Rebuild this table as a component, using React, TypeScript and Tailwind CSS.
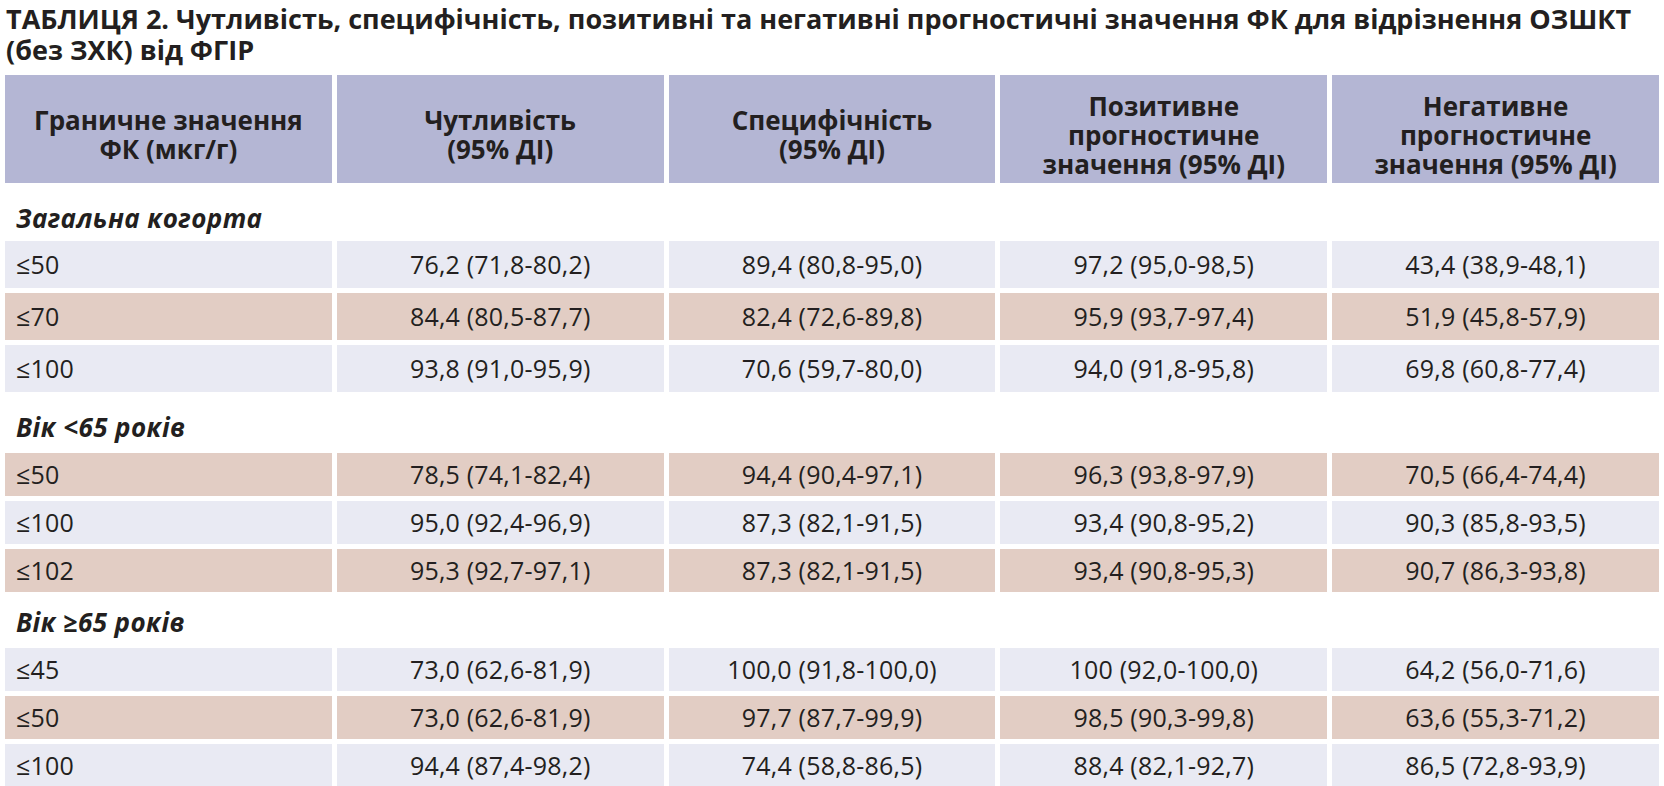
import React from "react";

type Row = { k: string; v: string[]; pink: boolean };
type Section = { label: string; rowH: string; labelCls: string; rows: Row[] };

const sections: Section[] = [
  {
    label: "Загальна когорта",
    rowH: "h-[47px]",
    labelCls: "pt-[20px] pb-[8px]",
    rows: [
      { k: "≤50", v: ["76,2 (71,8-80,2)", "89,4 (80,8-95,0)", "97,2 (95,0-98,5)", "43,4 (38,9-48,1)"], pink: false },
      { k: "≤70", v: ["84,4 (80,5-87,7)", "82,4 (72,6-89,8)", "95,9 (93,7-97,4)", "51,9 (45,8-57,9)"], pink: true },
      { k: "≤100", v: ["93,8 (91,0-95,9)", "70,6 (59,7-80,0)", "94,0 (91,8-95,8)", "69,8 (60,8-77,4)"], pink: false },
    ],
  },
  {
    label: "Вік <65 років",
    rowH: "h-[43px]",
    labelCls: "pt-[20px] pb-[11px]",
    rows: [
      { k: "≤50", v: ["78,5 (74,1-82,4)", "94,4 (90,4-97,1)", "96,3 (93,8-97,9)", "70,5 (66,4-74,4)"], pink: true },
      { k: "≤100", v: ["95,0 (92,4-96,9)", "87,3 (82,1-91,5)", "93,4 (90,8-95,2)", "90,3 (85,8-93,5)"], pink: false },
      { k: "≤102", v: ["95,3 (92,7-97,1)", "87,3 (82,1-91,5)", "93,4 (90,8-95,3)", "90,7 (86,3-93,8)"], pink: true },
    ],
  },
  {
    label: "Вік ≥65 років",
    rowH: "h-[43px]",
    labelCls: "pt-[15px] pb-[11px]",
    rows: [
      { k: "≤45", v: ["73,0 (62,6-81,9)", "100,0 (91,8-100,0)", "100 (92,0-100,0)", "64,2 (56,0-71,6)"], pink: false },
      { k: "≤50", v: ["73,0 (62,6-81,9)", "97,7 (87,7-99,9)", "98,5 (90,3-99,8)", "63,6 (55,3-71,2)"], pink: true },
      { k: "≤100", v: ["94,4 (87,4-98,2)", "74,4 (58,8-86,5)", "88,4 (82,1-92,7)", "86,5 (72,8-93,9)"], pink: false },
    ],
  },
];

const headers: string[][] = [
  ["Граничне значення", "ФК (мкг/г)"],
  ["Чутливість", "(95% ДІ)"],
  ["Специфічність", "(95% ДІ)"],
  ["Позитивне", "прогностичне", "значення (95% ДІ)"],
  ["Негативне", "прогностичне", "значення (95% ДІ)"],
];

export default function App() {
  return (
    <div
      className="w-[1664px] h-[786px] overflow-hidden bg-white px-[5px] text-[#231f20]"
      style={{ fontFamily: '"Open Sans", "Noto Sans", sans-serif' }}
    >
      <h1 className="pt-[3px] pl-[1px] text-[27px] leading-[31px] font-bold">
        ТАБЛИЦЯ 2. Чутливість, специфічність, позитивні та негативні прогностичні значення ФК для відрізнення ОЗШКТ
        <br />
        (без ЗХК) від ФГІР
      </h1>
      <div className="mt-[10px] grid grid-cols-5 gap-x-[5px]">
        {headers.map((lines, i) => (
          <div
            key={i}
            className="h-[108px] bg-[#b4b6d4] flex items-center justify-center pt-[12px] text-center text-[26px] leading-[29px] font-bold whitespace-nowrap"
          >
            <p>
              {lines.map((l, j) => (
                <React.Fragment key={j}>
                  {j > 0 && <br />}
                  {l}
                </React.Fragment>
              ))}
            </p>
          </div>
        ))}
      </div>
      {sections.map((s, si) => (
        <div key={si}>
          <div className={`${s.labelCls} pl-[11px] text-[26px] leading-[30px] font-bold italic tracking-[0.4px]`}>
            {s.label}
          </div>
          <div className="flex flex-col gap-[5px]">
            {s.rows.map((r, ri) => (
              <div key={ri} className="grid grid-cols-5 gap-x-[5px] text-[25px] tracking-[0.2px]">
                <div
                  className={`${s.rowH} ${r.pink ? "bg-[#e2cdc4]" : "bg-[#e9eaf3]"} flex items-center pl-[11px]`}
                >
                  {r.k}
                </div>
                {r.v.map((v, vi) => (
                  <div
                    key={vi}
                    className={`${s.rowH} ${r.pink ? "bg-[#e2cdc4]" : "bg-[#e9eaf3]"} flex items-center justify-center`}
                  >
                    {v}
                  </div>
                ))}
              </div>
            ))}
          </div>
        </div>
      ))}
    </div>
  );
}
